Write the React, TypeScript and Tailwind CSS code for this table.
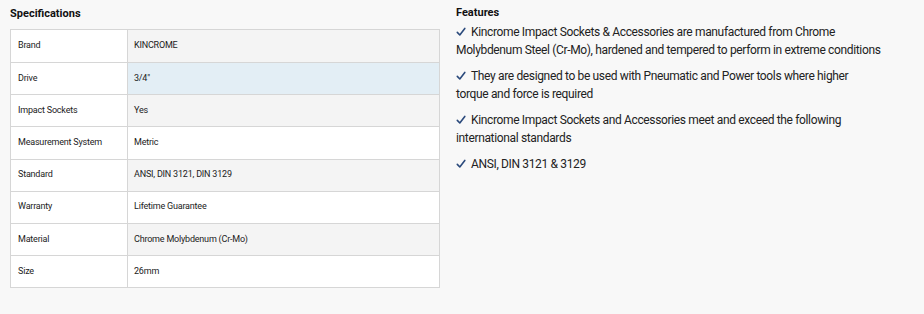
import React from "react";

const specs: [string, string][] = [
  ["Brand", "KINCROME"],
  ["Drive", "3/4\""],
  ["Impact Sockets", "Yes"],
  ["Measurement System", "Metric"],
  ["Standard", "ANSI, DIN 3121, DIN 3129"],
  ["Warranty", "Lifetime Guarantee"],
  ["Material", "Chrome Molybdenum (Cr-Mo)"],
  ["Size", "26mm"],
];

const features: React.ReactNode[] = [
  "Kincrome Impact Sockets & Accessories are manufactured from Chrome Molybdenum Steel (Cr-Mo), hardened and tempered to perform in extreme conditions",
  <>
    They are designed to be used with Pneumatic and Power tools where higher
    <br />
    torque and force is required
  </>,
  "Kincrome Impact Sockets and Accessories meet and exceed the following international standards",
  "ANSI, DIN 3121 & 3129",
];

function Check() {
  return (
    <svg
      width="10"
      height="10"
      viewBox="0 0 10 10"
      className="inline-block align-[-1px] mr-[5px]"
      fill="none"
      stroke="#2b4a7c"
      strokeWidth="1.6"
      strokeLinecap="round"
      strokeLinejoin="round"
    >
      <path d="M1.3 5.4 L3.8 8 L8.8 1.4" />
    </svg>
  );
}

export default function App() {
  return (
    <div
      className="w-[924px] h-[314px] bg-[#f8f8f8] text-[#222] flex"
      style={{ fontFamily: "Roboto, 'Liberation Sans', sans-serif" }}
    >
      <div className="ml-[10px] w-[430px] flex flex-col">
        <div className="h-[29px] flex items-center pb-[1px] text-[11px] font-bold text-[#111]">
          Specifications
        </div>
        <div className="border border-[#d6d6d6] bg-white flex flex-col">
          {specs.map(([k, v], i) => {
            const bg = i === 1 ? "bg-[#e3eef5]" : i % 2 === 0 ? "bg-[#f4f4f4]" : "bg-white";
            return (
              <div
                key={k}
                className={`flex h-[32.125px] text-[9px] tracking-[-0.2px] ${i > 0 ? "border-t border-[#d6d6d6]" : ""}`}
              >
                <div className="w-[117px] border-r border-[#d6d6d6] bg-white flex items-center pl-[7px]">
                  {k}
                </div>
                <div className={`flex-1 flex items-center pl-[6px] ${bg}`}>{v}</div>
              </div>
            );
          })}
        </div>
      </div>
      <div className="ml-[16px] w-[436px] pt-[4px] flex flex-col">
        <div className="text-[11px] leading-[18px] font-bold text-[#111] mb-[1px]">Features</div>
        <div className="flex flex-col gap-[8px] text-[12px] leading-[18px] tracking-[-0.35px]">
          {features.map((f, i) => (
            <p key={i}>
              <Check />
              {f}
            </p>
          ))}
        </div>
      </div>
    </div>
  );
}
